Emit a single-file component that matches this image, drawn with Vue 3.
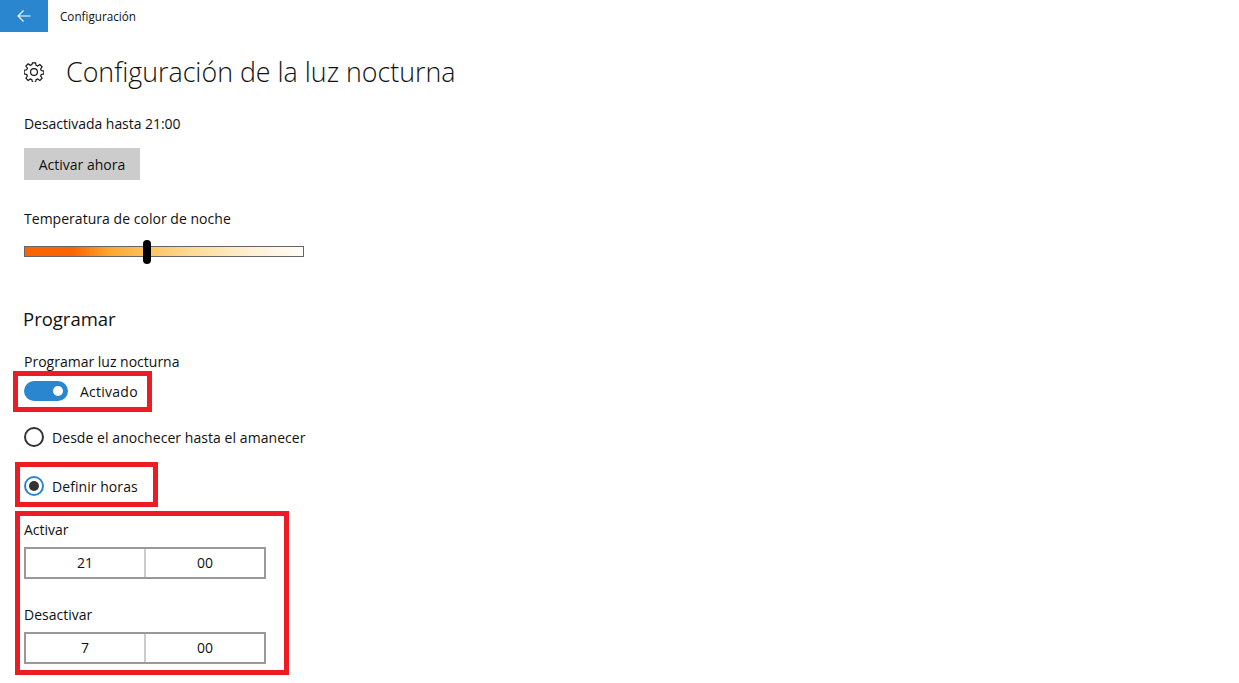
<script setup>
const times = [
  { label: 'Activar', hour: '21', minute: '00' },
  { label: 'Desactivar', hour: '7', minute: '00' }
]
</script>

<template>
  <div class="page">
    <header class="topbar">
      <button class="back" aria-label="Atrás">
        <svg width="16" height="16" viewBox="0 0 16 16" fill="none" stroke="#fff" stroke-width="1.1">
          <path d="M14.5 8H2M7.5 2.5L2 8l5.500 5.500" />
        </svg>
      </button>
      <span class="crumb">Configuración</span>
    </header>

    <main class="content">
      <div class="title-row">
        <svg class="gear" width="20" height="20" viewBox="0 0 20 20" fill="none" stroke="#111" stroke-width="1.15">
          <circle cx="10" cy="10" r="3.4" />
          <path d="M8.4 0.8h3.2l.5 2.6 1.6.7 2.2-1.5 2.2 2.2-1.5 2.2.7 1.6 2.6.5v2.8l-2.6.5-.7 1.6 1.5 2.2-2.2 2.2-2.2-1.5-1.6.7-.5 2.6H8.4l-.5-2.6-1.6-.7-2.2 1.5-2.2-2.2 1.5-2.2-.7-1.6-2.6-.5V8.3l2.6-.5.7-1.6L1.9 4l2.2-2.2 2.2 1.5 1.6-.7z" />
        </svg>
        <h1>Configuración de la luz nocturna</h1>
      </div>

      <p class="status">Desactivada hasta 21:00</p>
      <button class="action">Activar ahora</button>

      <p class="temp-label">Temperatura de color de noche</p>
      <div class="slider"><span class="thumb"></span></div>

      <h2>Programar</h2>
      <p class="sched-label">Programar luz nocturna</p>
      <div class="toggle-row">
        <span class="toggle"><span class="knob"></span></span>
        <span class="toggle-text">Activado</span>
      </div>

      <div class="radio-row first">
        <span class="radio"></span>
        <span>Desde el anochecer hasta el amanecer</span>
      </div>
      <div class="radio-row second">
        <span class="radio on"><span class="dot"></span></span>
        <span>Definir horas</span>
      </div>

      <section v-for="t in times" :key="t.label" class="time-block">
        <p class="time-label">{{ t.label }}</p>
        <div class="time-box">
          <span class="cell">{{ t.hour }}</span>
          <span class="cell">{{ t.minute }}</span>
        </div>
      </section>
    </main>

    <div class="mark m1"></div>
    <div class="mark m2"></div>
    <div class="mark m3"></div>
  </div>
</template>

<style>
html, body { margin: 0; background: #fff; }
</style>

<style scoped>
.page {
  position: relative;
  width: 1239px;
  height: 683px;
  overflow: hidden;
  background: #fff;
  color: #111;
  font-family: "Open Sans", "Noto Sans", sans-serif;
  font-size: 14px;
  letter-spacing: 0;
}
p, h1, h2 { margin: 0; font-weight: 400; }
.topbar { display: flex; align-items: center; height: 32px; }
.back {
  width: 48px; height: 32px; border: 0; padding: 0;
  background: #2b86d0;
  display: flex; align-items: center; justify-content: center;
}
.crumb { margin-left: 12px; font-size: 11.7px; }
.content { padding-left: 24px; display: flex; flex-direction: column; align-items: flex-start; }
.title-row { display: flex; align-items: center; height: 40px; margin-top: 20px; }
.gear { flex: none; }
h1 { margin-left: 22px; font-size: 26.8px; font-weight: 300; line-height: 40px; white-space: nowrap; }
.status { margin-top: 20px; height: 24px; line-height: 24px; letter-spacing: -0.05px; }
.action {
  margin-top: 12px; width: 116px; height: 32px; border: 0; padding: 0;
  background: #ccc; color: #111; font: inherit; letter-spacing: inherit;
}
.temp-label { margin-top: 27px; height: 24px; line-height: 24px; letter-spacing: 0.03px; }
.slider {
  position: relative;
  margin-top: 15px; width: 280px; height: 11px; box-sizing: border-box;
  border: 1px solid #666;
  background: linear-gradient(90deg, #fb6400 0, #fb6400 17%, #fda52e 30%, #fec35f 44%, #ffdd9b 62%, #fff1d6 82%, #fffdf8 100%);
}
.thumb {
  position: absolute; left: 118px; top: -7px;
  width: 8px; height: 24px; border-radius: 4px; background: #000;
}
h2 { margin-top: 47px; margin-left: -1px; height: 30px; font-size: 18.5px; line-height: 30px; }
.sched-label { margin-top: 16px; height: 24px; line-height: 24px; }
.toggle-row { display: flex; align-items: center; gap: 12px; height: 20px; margin-top: 7px; }
.toggle-text { letter-spacing: 0.25px; }
.toggle {
  position: relative; width: 44px; height: 20px; border-radius: 10px;
  background: #2b86d0;
}
.knob {
  position: absolute; left: 29px; top: 5px;
  width: 10px; height: 10px; border-radius: 50%; background: #fff;
}
.radio-row { display: flex; align-items: center; gap: 8px; height: 20px; letter-spacing: 0.06px; }
.radio-row.first { margin-top: 26px; }
.radio-row.second { margin-top: 29px; }
.radio {
  box-sizing: border-box; width: 20px; height: 20px; border-radius: 50%;
  border: 2px solid #333;
  display: flex; align-items: center; justify-content: center;
}
.radio.on { border-color: #2b86d0; }
.dot { width: 10px; height: 10px; border-radius: 50%; background: #333; }
.time-block { display: flex; flex-direction: column; }
.time-label { margin-top: 22px; height: 24px; line-height: 24px; }
.time-box {
  margin-top: 5px; width: 242px; height: 32px; box-sizing: border-box;
  border: 2px solid #999; display: flex;
}
.cell { flex: 1; display: flex; align-items: center; justify-content: center; padding-bottom: 2px; }
.cell + .cell { border-left: 2px solid #ccc; }
.time-block + .time-block .time-label { margin-top: 24px; }

.mark { position: absolute; box-sizing: border-box; border: 5px solid #ed1c24; pointer-events: none; }
.m1 { left: 13px; top: 371px; width: 139px; height: 41px; }
.m2 { left: 15px; top: 462px; width: 143px; height: 45px; }
.m3 { left: 15px; top: 511px; width: 274px; height: 164px; }
</style>
